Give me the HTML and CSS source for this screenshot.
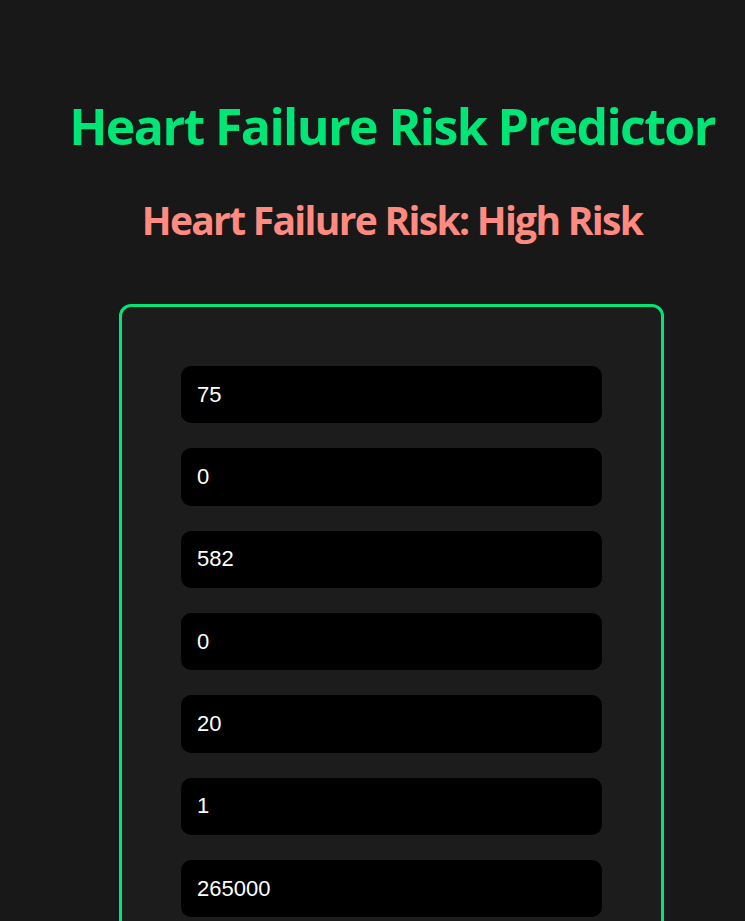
FILE: index.html
```html
<!DOCTYPE html>
<html lang="en">
<head>
<meta charset="utf-8">
<title>Heart Failure Risk Predictor</title>
<link rel="stylesheet" href="styles.css">
</head>
<body>
<main class="page">
  <h1 class="title">Heart Failure Risk Predictor</h1>
  <h2 class="result">Heart Failure Risk: High Risk</h2>
  <form class="card">
    <input class="field" type="text" value="75">
    <input class="field" type="text" value="0">
    <input class="field" type="text" value="582">
    <input class="field" type="text" value="0">
    <input class="field" type="text" value="20">
    <input class="field" type="text" value="1">
    <input class="field" type="text" value="265000">
    <input class="field" type="text" value="1.9">
    <input class="field" type="text" value="130">
    <input class="field" type="text" value="1">
    <input class="field" type="text" value="0">
    <input class="field" type="text" value="4">
    <button class="submit" type="button">Predict</button>
  </form>
</main>
</body>
</html>
```
FILE: styles.css
```css
html, body {
  margin: 0;
  padding: 0;
  background: #181818;
}
body {
  overflow-x: hidden;
}
.page {
  padding: 0 0 40px 38px;
  display: flex;
  flex-direction: column;
  align-items: center;
  font-family: "Open Sans", "Noto Sans", sans-serif;
}
.title {
  margin: 96px 0 0 1px;
  font-size: 50px;
  line-height: 60px;
  font-weight: 700;
  letter-spacing: -1.6px;
  color: #00e676;
  white-space: nowrap;
}
.result {
  margin: 40px 0 0 1px;
  font-size: 39px;
  line-height: 47px;
  font-weight: 700;
  letter-spacing: -1.7px;
  color: #ff8a80;
  white-space: nowrap;
}
.card {
  margin-top: 61px;
  width: 421px;
  padding: 59px;
  border: 3px solid #00e676;
  border-radius: 12px;
  background: #1c1c1c;
  display: flex;
  flex-direction: column;
  gap: 25px;
}
.field {
  box-sizing: border-box;
  height: 57.33px;
  width: 100%;
  margin: 0;
  padding: 0 16px;
  border: none;
  border-radius: 10px;
  background: #000;
  color: #fff;
  font-family: "Liberation Sans", Arial, sans-serif;
  font-size: 22px;
  outline: none;
}
.submit {
  height: 57px;
  border: none;
  border-radius: 10px;
  background: #00e676;
  color: #000;
  font-family: "Open Sans", sans-serif;
  font-size: 22px;
  font-weight: 700;
}
```
